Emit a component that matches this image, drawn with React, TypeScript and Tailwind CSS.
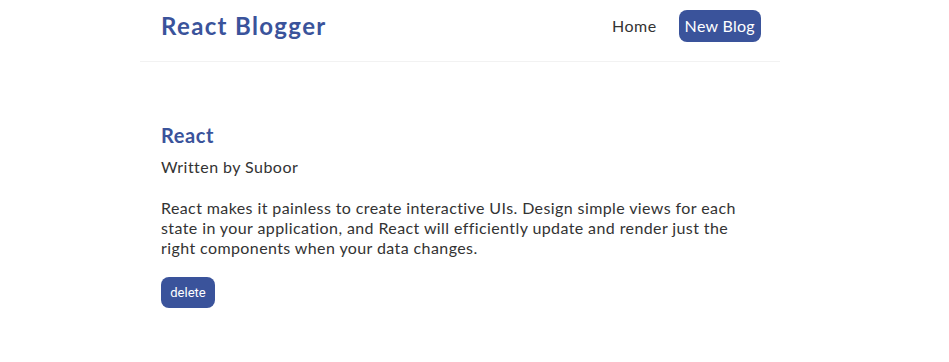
import React from 'react';

const blogs = [
  {
    id: 1,
    title: 'React',
    author: 'Suboor',
    body: 'React makes it painless to create interactive UIs. Design simple views for each state in your application, and React will efficiently update and render just the right components when your data changes.',
  },
];

const Navbar: React.FC = () => (
  <nav className="mx-[140px] w-[640px] flex items-start px-[19px] pt-[10px] h-[62px] border-b border-[#f2f2f2]">
    <h1 className="ml-[2px] h-[32px] flex items-center text-[24px] font-bold text-[#3a539b] tracking-[1.35px]">React Blogger</h1>
    <div className="ml-auto flex items-center h-[32px]">
      <a className="text-[16px] text-[#333] tracking-[0.5px]">Home</a>
      <a className="ml-[22px] text-[16px] text-white bg-[#3a539b] rounded-[8px] px-[6px] h-[32px] flex items-center tracking-[0.3px]">New Blog</a>
    </div>
  </nav>
);

const App: React.FC = () => {
  return (
    <div className="w-[949px] h-[362px] bg-white text-[#333]" style={{ fontFamily: 'Lato, "Noto Sans", sans-serif' }}>
      <Navbar />
      <main className="mx-[140px] w-[640px] px-[21px] pt-[61px]">
        {blogs.map((blog) => (
          <div key={blog.id}>
            <h2 className="text-[20px] font-bold text-[#3a539b] leading-[24px] tracking-[0.6px]">{blog.title}</h2>
            <p className="mt-[8px] text-[16px] leading-[24px] tracking-[0.45px]">Written by {blog.author}</p>
            <p className="mt-[19px] text-[16px] leading-[20px] w-[590px] tracking-[0.4px]">{blog.body}</p>
            <button className="mt-[19px] bg-[#3a539b] text-white text-[13px] rounded-[8px] w-[54px] h-[31px]" style={{ fontFamily: 'Roboto, sans-serif' }}>
              delete
            </button>
          </div>
        ))}
      </main>
    </div>
  );
};

export default App;
